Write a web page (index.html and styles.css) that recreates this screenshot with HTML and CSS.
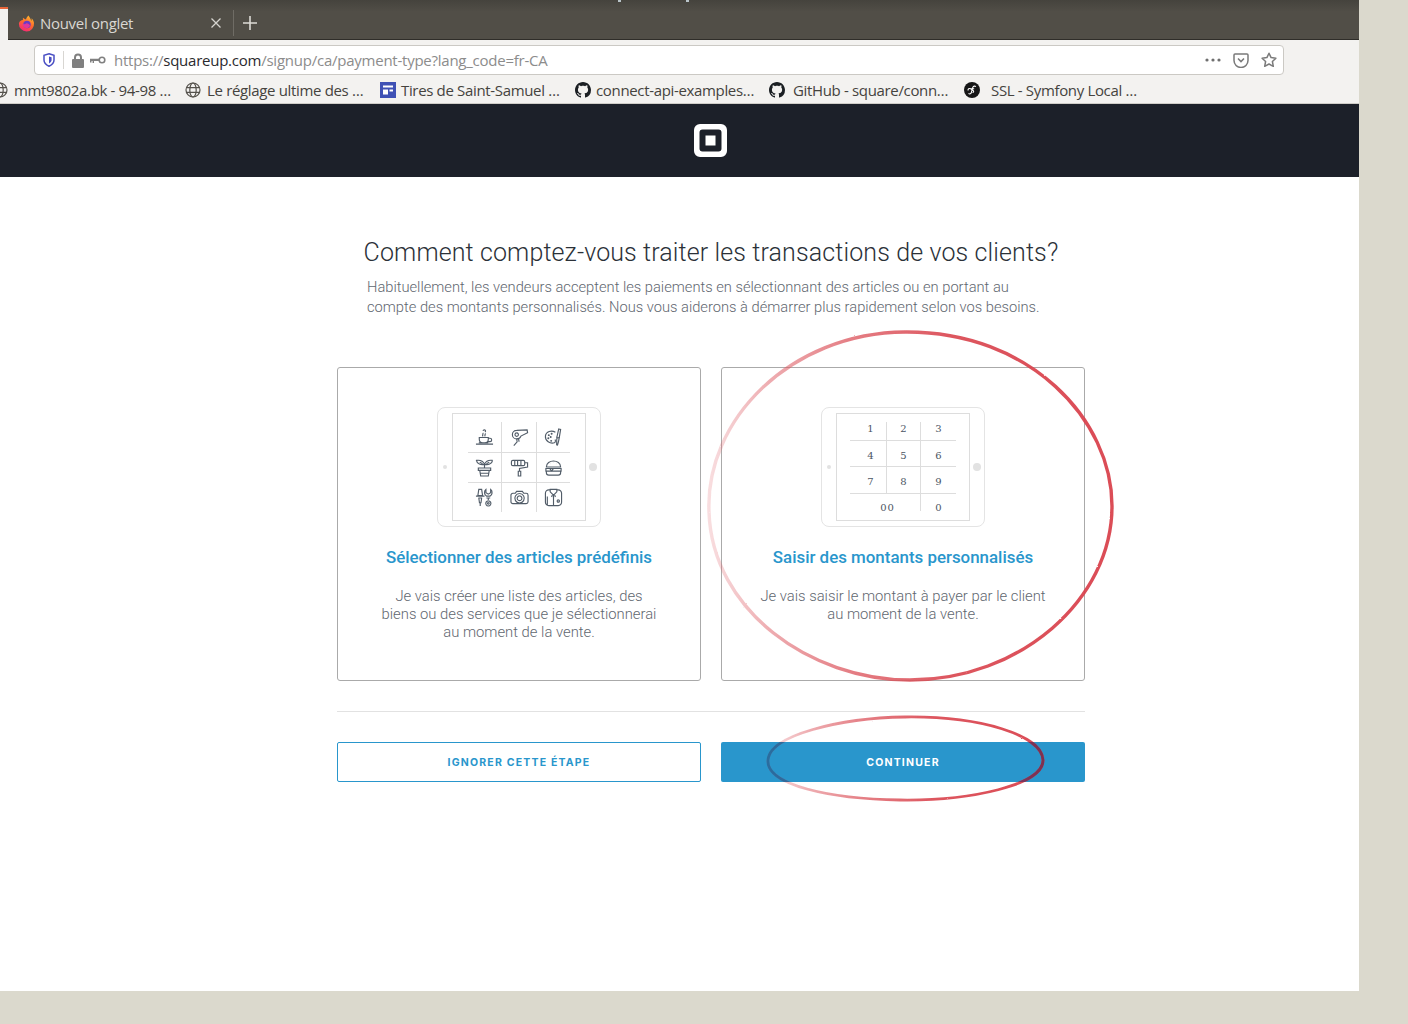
FILE: index.html
```html
<!DOCTYPE html>
<html lang="fr">
<head>
    <meta charset="UTF-8">
    <meta name="viewport" content="width=device-width, initial-scale=1.0">
    <title>Square - Type de paiement</title>
    <link rel="stylesheet" href="styles.css">
</head>
<body>
    <svg class="defs" width="0" height="0">
        <defs>
            <symbol id="octocat" viewBox="0 0 16 16"><path fill="#1b1f23" d="M8 0C3.58 0 0 3.58 0 8c0 3.54 2.29 6.53 5.47 7.59.4.07.55-.17.55-.38 0-.19-.01-.82-.01-1.49-2.01.37-2.53-.49-2.69-.94-.09-.23-.48-.94-.82-1.13-.28-.15-.68-.52-.01-.53.63-.01 1.08.58 1.23.82.72 1.21 1.87.87 2.33.66.07-.52.28-.87.51-1.07-1.78-.2-3.64-.89-3.64-3.95 0-.87.31-1.59.82-2.15-.08-.2-.36-1.02.08-2.12 0 0 .67-.21 2.2.82.64-.18 1.32-.27 2-.27.68 0 1.36.09 2 .27 1.53-1.04 2.2-.82 2.2-.82.44 1.1.16 1.92.08 2.12.51.56.82 1.27.82 2.15 0 3.07-1.87 3.75-3.65 3.95.29.25.54.73.54 1.48 0 1.07-.01 1.93-.01 2.2 0 .21.15.46.55.38A8.013 8.013 0 0016 8c0-4.42-3.58-8-8-8z"/></symbol>
            <symbol id="globe" viewBox="0 0 16 16"><g fill="none" stroke="#55524c" stroke-width="1.2"><circle cx="8" cy="8" r="7"/><ellipse cx="8" cy="8" rx="3.2" ry="7"/><path d="M1.4 5.6h13.2M1.4 10.4h13.2"/></g></symbol>
            <linearGradient id="fox" x1=".8" y1="0" x2=".3" y2="1">
                <stop offset="0" stop-color="#ffc02e"/>
                <stop offset=".5" stop-color="#ff6a2b"/>
                <stop offset="1" stop-color="#f5247c"/>
            </linearGradient>
        </defs>
    </svg>

    <div class="window">
        <div class="tabbar">
            <i class="speck speck-a"></i>
            <i class="speck speck-b"></i>
            <div class="tab-edge"></div>
            <div class="tab">
                <svg class="tab-icon" width="17" height="17" viewBox="0 0 17 17">
                    <path d="M8.500 16.500A7.700 7.700 0 0 0 16 8c-.2-1.800-1-3.500-2.500-4.800.3 1.100.2 2-.2 2.700C12.800 3.500 11 1.800 10.500.5 9 2 8.300 3.300 8 4.500 6.800 4.300 5.800 3.600 5 2.800c-.2 1-.2 1.500 0 2.200C3 5 1.300 6.500.9 8.500a7.700 7.700 0 0 0 7.600 8z" fill="url(#fox)"/>
                    <circle cx="9" cy="9.500" r="3.700" fill="#6a3bc4"/>
                    <path d="M4.300 8.800c1.300.6 2.800.4 3.900-.4 1.700-.2 3.200.8 3.900 2.300-.8 1.700-2.500 2.600-4.300 2.300-1.900-.3-3.200-2.200-3.500-4.200z" fill="#e0389a"/>
                </svg>
                <span class="tab-title">Nouvel onglet</span>
                <svg class="tab-close" width="10" height="10" viewBox="0 0 10 10"><path d="M.5.500l9 9M9.500.500l-9 9" stroke="#d6d4cf" stroke-width="1.300"/></svg>
            </div>
            <div class="tab-sep"></div>
            <svg class="tab-new" width="14" height="14" viewBox="0 0 14 14"><path d="M7 0v14M0 7h14" stroke="#dddbd6" stroke-width="1.600"/></svg>
        </div>

        <div class="toolbar">
            <div class="urlbar">
                <svg class="ico-shield" width="12" height="14" viewBox="0 0 12 14"><path d="M6 .8l5 1.600v4.600c0 3-2.300 5-5 6.200-2.700-1.200-5-3.200-5-6.200V2.400z" fill="none" stroke="#4a4fc4" stroke-width="1.500"/><path d="M6 3.500l2.600.8v2.800c0 1.500-1.200 2.600-2.600 3.300z" fill="#4a4fc4"/></svg>
                <div class="url-sep"></div>
                <svg class="ico-lock" width="12" height="15" viewBox="0 0 12 15"><path d="M2 6V4.500a4 4 0 0 1 8 0V6h1a1 1 0 0 1 1 1v7a1 1 0 0 1-1 1H1a1 1 0 0 1-1-1V7a1 1 0 0 1 1-1zm2 0h4V4.500a2 2 0 0 0-4 0z" fill="#808080"/></svg>
                <svg class="ico-key" width="16" height="8" viewBox="0 0 16 8"><circle cx="12" cy="4" r="2.800" fill="none" stroke="#808080" stroke-width="1.600"/><path d="M0 2.800h9v2.200H4v2H2.600V5H1.500v1.500H0z" fill="#808080"/></svg>
                <div class="url"><span class="url-dim">https://</span><span class="url-host">squareup.com</span><span class="url-dim">/signup/ca/payment-type?lang_code=fr-CA</span></div>
                <div class="url-actions">
                    <svg width="16" height="4" viewBox="0 0 16 4"><g fill="#6f6f6f"><circle cx="2" cy="2" r="1.600"/><circle cx="8" cy="2" r="1.600"/><circle cx="14" cy="2" r="1.600"/></g></svg>
                    <svg width="16" height="15" viewBox="0 0 16 15"><path d="M2 1h12a1 1 0 0 1 1 1v5.500a7 7 0 0 1-14 0V2a1 1 0 0 1 1-1z" fill="none" stroke="#7a7a7a" stroke-width="1.500"/><path d="M5 5.500l3 3 3-3" fill="none" stroke="#7a7a7a" stroke-width="1.600"/></svg>
                    <svg width="16" height="16" viewBox="0 0 16 16"><path d="M8 1.200l2.100 4.400 4.800.6-3.500 3.300.9 4.800L8 12l-4.300 2.300.9-4.800L1.100 6.200l4.800-.6z" fill="none" stroke="#7a7a7a" stroke-width="1.500" stroke-linejoin="round"/></svg>
                </div>
            </div>
        </div>

        <div class="bookmarks">
            <div class="bookmark bm-1"><svg width="16" height="16"><use href="#globe"/></svg><span>mmt9802a.bk - 94-98 …</span></div>
            <div class="bookmark bm-2"><svg width="16" height="16"><use href="#globe"/></svg><span>Le réglage ultime des …</span></div>
            <div class="bookmark bm-3"><svg width="16" height="16" viewBox="0 0 16 16"><rect width="16" height="16" fill="#3f51b5"/><path d="M3 3.500h10v2H3zM3 7.500h5v5H3zM9.500 7.500H13v2H9.500z" fill="#fff"/></svg><span>Tires de Saint-Samuel …</span></div>
            <div class="bookmark bm-4"><svg width="16" height="16"><use href="#octocat"/></svg><span>connect-api-examples…</span></div>
            <div class="bookmark bm-5"><svg width="16" height="16"><use href="#octocat"/></svg><span>GitHub - square/conn…</span></div>
            <div class="bookmark bm-6"><svg width="16" height="16" viewBox="0 0 16 16"><circle cx="8" cy="8" r="8" fill="#161616"/><path d="M11.800 4.800c-.6-1-2.400-.9-3 .6L7.300 10.600c-.4 1.300-1.500 1.700-2.800 1M4.200 8.500c-.6-1.400 1-2.600 2.500-1.700l2.400 1.700c1 .8.600 2-.6 2M6.300 6.700h3.900" fill="none" stroke="#fff" stroke-width="1.100"/></svg><span>SSL - Symfony Local …</span></div>
        </div>

        <header class="site-header">
            <svg class="square-logo" width="33" height="33" viewBox="0 0 33 33"><path fill-rule="evenodd" d="M6 0h21a6 6 0 0 1 6 6v21a6 6 0 0 1-6 6H6a6 6 0 0 1-6-6V6a6 6 0 0 1 6-6zm2.500 5.500a3 3 0 0 0-3 3v16a3 3 0 0 0 3 3h16a3 3 0 0 0 3-3v-16a3 3 0 0 0-3-3zM11.500 11.500h10v10h-10z" fill="#fff"/></svg>
        </header>

        <main class="content">
            <h1 class="title">Comment comptez-vous traiter les transactions de vos clients?</h1>
            <p class="intro">Habituellement, les vendeurs acceptent les paiements en sélectionnant des articles ou en portant au compte des montants personnalisés. Nous vous aiderons à démarrer plus rapidement selon vos besoins.</p>

            <div class="choices">
                <section class="card">
                    <div class="tablet">
                        <i class="cam"></i>
                        <div class="screen">
                            <div class="icon-grid">
                                <!-- cup -->
                                <div class="cell"><svg viewBox="0 0 20 20"><path d="M1 17h18M4 15.500h10M4.500 10H14v1.800a3.700 3.700 0 0 1-3.700 3.700H8.200a3.700 3.700 0 0 1-3.700-3.700zM14 10.800h1.800a1.700 1.700 0 0 1 0 3.500h-2.500M8.500 8.800c-1.600-1.400.8-2.400-.3-3.700M10.800 8.800c-1.200-1.200.4-2 .1-3.200M8.500 3a1.300 1.300 0 1 1 2 1.300"/></svg></div>
                                <!-- hair dryer -->
                                <div class="cell"><svg viewBox="0 0 20 20"><path d="M7 2.500l11-.5.500 3-7 3.500C10.800 10.500 9 11.500 7 11.500a4.500 4.500 0 0 1 0-9zM7 5.200a1.800 1.800 0 1 0 .1 0M7 11.500l.5 3L4 18.500M9 11l.5 3.500"/></svg></div>
                                <!-- palette -->
                                <div class="cell"><svg viewBox="0 0 20 20"><path d="M12 4.500C8 2 2 3.500 1.500 8.500 1 13.500 6.500 17 11 15.500c2-.7.500-2.500 1-3.500"/><path class="dab" d="M5 7.500h.1M8 6h.1M4.500 10.800h.1M7.500 13.500h.1M7 9.500h.1"/><path d="M15.500 1l2 .5-1.500 9-2.500-.5zM13.500 10l2.500.5-.8 4-1 3.500-.9-.3.1-3.700z"/></svg></div>
                                <!-- plant -->
                                <div class="cell"><svg viewBox="0 0 20 20"><path d="M3.500 10.500h13v2.500h-13zM5 13l1 6h8l1-6M5.500 16h9M10 10.500V6M10 6.500C8.500 3 5 2 1.500 2.500 2 6 6.500 8 10 6.500zM10 6.500c1.500-3.500 5-4.500 8.500-4M10 6.500c3.500 1.500 8-.5 8.500-4M5 4.500l3 1.500M15 4.500L12 6"/></svg></div>
                                <!-- paint roller -->
                                <div class="cell"><svg viewBox="0 0 20 20"><rect x="1.500" y="2.500" width="14" height="5.500" rx="1.500"/><path d="M15.500 5h3v4.500L10 11v3M8.700 14h2.600v5H8.700zM5 3v5M8 3v5M11.500 3v5"/></svg></div>
                                <!-- burger -->
                                <div class="cell"><svg viewBox="0 0 20 20"><path d="M2.500 9.500C2.500 1 17.500 1 17.500 9.500zM2 11h16v2.800H2zM2.500 13.800v1.700a2.500 2.500 0 0 0 2.500 2.500h10a2.500 2.500 0 0 0 2.500-2.500v-1.700M6 11l2 2.800 2-2.800M7 6h.1M10 4.500h.1M13 6h.1"/></svg></div>
                                <!-- tools -->
                                <div class="cell"><svg viewBox="0 0 20 20"><path d="M4 1.500h3L8 8H3zM1 8.500h9M3.500 10.500h4M4 10.500l.7 5h1.600l.7-5M5.500 15.500v3.500M11.500 1.500V5l2.500 1.500L16.500 5V1.500c2.500 2 1.500 6-.5 7H12c-2-1-3-5-.5-7zM12 10.500h4M14 10v2.500M14 13.500a2.700 2.700 0 1 0 .1 0M14 15.300a.9.900 0 1 0 .1 0"/></svg></div>
                                <!-- camera -->
                                <div class="cell"><svg viewBox="0 0 20 20"><path d="M3 5.500h2.500L7 3.500h6l1.500 2H17a2 2 0 0 1 2 2v7a2 2 0 0 1-2 2H3a2 2 0 0 1-2-2v-7a2 2 0 0 1 2-2zM10 5.800a5 5 0 1 0 .1 0M10 8.300a2.500 2.500 0 1 0 .1 0"/></svg></div>
                                <!-- shirt -->
                                <div class="cell"><svg viewBox="0 0 20 20"><path d="M6.500 2H5a3.500 3.500 0 0 0-3.500 3.500V15A3.500 3.500 0 0 0 5 18.500h10a3.500 3.500 0 0 0 3.500-3.500V5.500A3.500 3.500 0 0 0 15 2h-1.500M6.500 1.500h7v2.500L10 7.500 6.500 4zM10 7.500V18.500M8.700 7.500l-.7 2M11.300 7.500l.7 2M15 12.500a1.200 1.200 0 1 0 .1 0M3.500 9v9"/></svg></div>
                            </div>
                        </div>
                        <i class="home"></i>
                    </div>
                    <h2 class="card-title">Sélectionner des articles prédéfinis</h2>
                    <p class="card-text">Je vais créer une liste des articles, des<br>biens ou des services que je sélectionnerai<br>au moment de la vente.</p>
                </section>

                <section class="card">
                    <div class="tablet">
                        <i class="cam"></i>
                        <div class="screen">
                            <div class="keypad">
                                <span class="key">1</span><span class="key">2</span><span class="key">3</span>
                                <span class="key">4</span><span class="key">5</span><span class="key">6</span>
                                <span class="key">7</span><span class="key">8</span><span class="key">9</span>
                                <span class="key key-wide">00</span><span class="key">0</span>
                            </div>
                        </div>
                        <i class="home"></i>
                    </div>
                    <h2 class="card-title">Saisir des montants personnalisés</h2>
                    <p class="card-text">Je vais saisir le montant à payer par le client<br>au moment de la vente.</p>
                </section>
            </div>

            <div class="actions">
                <button class="btn btn-outline">Ignorer cette étape</button>
                <button class="btn btn-solid">Continuer</button>
            </div>
        </main>
    </div>

    <svg class="marks" width="1408" height="1024" viewBox="0 0 1408 1024">
        <defs>
            <linearGradient id="fade" x1="0" x2="1" y1="0" y2="0">
                <stop offset="0" stop-color="#e0666e" stop-opacity=".22"/>
                <stop offset=".15" stop-color="#dd5a62" stop-opacity=".5"/>
                <stop offset=".35" stop-color="#dd5a62" stop-opacity=".78"/>
                <stop offset=".6" stop-color="#d9434d" stop-opacity=".9"/>
                <stop offset="1" stop-color="#d9434d" stop-opacity=".95"/>
            </linearGradient>
            <linearGradient id="fade-btn" x1="0" x2="1" y1="0" y2="0">
                <stop offset="0" stop-color="#2a6d9f"/>
                <stop offset=".85" stop-color="#7a3a66"/>
                <stop offset="1" stop-color="#7d3050"/>
            </linearGradient>
            <filter id="pencil" x="-5%" y="-5%" width="110%" height="110%">
                <feTurbulence type="fractalNoise" baseFrequency=".35" numOctaves="2" seed="4"/>
                <feDisplacementMap in="SourceGraphic" scale="1.500" xChannelSelector="R" yChannelSelector="G"/>
                <feGaussianBlur stdDeviation=".4"/>
            </filter>
            <clipPath id="btn-clip"><rect x="721" y="742" width="364" height="40"/></clipPath>
        </defs>
        <path class="mark" d="M709 512C705 420 790 333 905 332C1030 331 1112 420 1112 506C1112 600 1020 680 910 680C810 680 712 610 709 512Z"/>
        <path class="mark mark-thin" d="M768 760C770 735 840 718 905 717C980 716 1042 735 1043 760C1044 785 970 801 900 800C830 799 766 785 768 760Z"/>
        <g clip-path="url(#btn-clip)">
            <path class="mark mark-thin mark-over" d="M768 760C770 735 840 718 905 717C980 716 1042 735 1043 760C1044 785 970 801 900 800C830 799 766 785 768 760Z"/>
        </g>
    </svg>
</body>
</html>
```

FILE: styles.css
```css
* {
    box-sizing: border-box;
}
body {
    margin: 0;
    height: 1024px;
    overflow: hidden;
    background-color: #dbd9cd;
    font-family: "Roboto", sans-serif;
    position: relative;
}
.defs {
    position: absolute;
}
.window {
    width: 1359px;
    height: 991px;
    background-color: #fff;
    display: flex;
    flex-direction: column;
}

/* browser chrome */
.tabbar {
    position: relative;
    height: 40px;
    flex: none;
    display: flex;
    align-items: center;
    padding-top: 7px;
    background: linear-gradient(#45433d, #514e47 30%);
    border-bottom: 1px solid #2f2d29;
}
.speck {
    position: absolute;
    top: 0;
    width: 3px;
    height: 2px;
    background-color: #b9c4c9;
}
.speck-a { left: 618px; }
.speck-b { left: 686px; }
.tab-edge {
    width: 8px;
    height: 33px;
    margin-bottom: -1px;
    align-self: flex-end;
    background-color: #f3f2f0;
    border-top: 2px solid #e8663a;
}
.tab {
    width: 225px;
    display: flex;
    align-items: center;
    padding-left: 10px;
    font-family: "Open Sans", sans-serif;
    font-size: 15px;
    letter-spacing: -0.3px;
    color: #d9d7d2;
}
.tab-icon {
    margin-right: 5px;
}
.tab-close {
    margin-left: auto;
    margin-right: 12px;
}
.tab-sep {
    width: 1px;
    height: 26px;
    background-color: #6f6c65;
}
.tab-new {
    margin-left: 9px;
}
.toolbar {
    height: 40px;
    flex: none;
    background-color: #f3f2f0;
    padding: 5px 75px 5px 34px;
}
.urlbar {
    height: 30px;
    display: flex;
    align-items: center;
    padding: 0 6px 0 8px;
    background-color: #fff;
    border: 1px solid #cbc9c4;
    border-radius: 4px;
    font-family: "Open Sans", sans-serif;
    font-size: 15px;
    letter-spacing: -0.24px;
}
.ico-shield {
    flex: none;
}
.url-sep {
    width: 1px;
    height: 18px;
    margin: 0 8px;
    background-color: #d8d6d2;
}
.ico-key {
    margin-left: 6px;
    margin-right: 8px;
}
.url-dim {
    color: #8c8c8c;
}
.url-host {
    color: #2a2a2e;
}
.url-actions {
    margin-left: auto;
    display: flex;
    align-items: center;
    gap: 12px;
}
.bookmarks {
    height: 24px;
    flex: none;
    display: flex;
    align-items: center;
    margin-left: -8px;
    padding-bottom: 3px;
    background-color: #f3f2f0;
    font-family: "Open Sans", sans-serif;
    font-size: 15px;
    letter-spacing: -0.34px;
    color: #45433e;
    border-bottom: 1px solid #cfcdc8;
    white-space: nowrap;
}
.bookmark {
    display: flex;
    align-items: center;
    gap: 6px;
}
.bookmark svg {
    flex: none;
}
.bm-1 { width: 193px; }
.bm-2 { width: 195px; }
.bm-3 { width: 195px; gap: 5px; }
.bm-4 { width: 194px; gap: 5px; }
.bm-5 { width: 195px; gap: 8px; }
.bm-6 span { margin-left: 5px; }

/* square page */
.site-header {
    height: 73px;
    flex: none;
    display: flex;
    align-items: center;
    justify-content: center;
    padding-left: 61px;
    background-color: #1c2029;
}
.content {
    width: 748px;
    margin-left: 337px;
    padding-top: 60px;
}
.title {
    margin: 0;
    font-size: 25px;
    font-weight: 300;
    letter-spacing: 0.12px;
    line-height: 32px;
    text-align: center;
    white-space: nowrap;
    color: #2b3138;
}
.intro {
    width: 690px;
    margin: 8px 0 0 30px;
    font-size: 14.700px;
    font-weight: 300;
    line-height: 20px;
    color: #5f6770;
}
.choices {
    display: grid;
    grid-template-columns: 1fr 1fr;
    gap: 20px;
    margin-top: 50px;
}
.card {
    height: 314px;
    padding-top: 39px;
    text-align: center;
    border: 1px solid #aaa;
    border-radius: 3px;
}
.tablet {
    width: 164px;
    height: 120px;
    margin: 0 auto;
    padding: 5px 0;
    display: flex;
    align-items: center;
    border: 1px solid #e4e4e4;
    border-radius: 8px;
}
.cam {
    width: 4px;
    height: 4px;
    margin: 0 5px;
    border-radius: 50%;
    background-color: #e2e2e2;
}
.home {
    width: 8px;
    height: 8px;
    margin-left: 3px;
    border-radius: 50%;
    background-color: #e2e2e2;
}
.screen {
    width: 134px;
    height: 108px;
    padding: 8px 15px;
    border: 1px solid #ddd;
}
.icon-grid {
    display: grid;
    grid-template-columns: 34px 35px 33px;
    grid-template-rows: 31px 30px 29px;
}
.cell {
    display: flex;
    align-items: center;
    justify-content: center;
    border-right: 1px solid #ddd;
    border-bottom: 1px solid #ddd;
}
.cell:nth-child(3n) {
    border-right: none;
}
.cell:nth-child(n+7) {
    border-bottom: none;
}
.cell svg {
    width: 19px;
    height: 19px;
    fill: none;
    stroke: #515c68;
    stroke-width: 1.200;
}
.cell .dab {
    stroke-width: 2;
    stroke-linecap: round;
}
.keypad {
    display: grid;
    grid-template-columns: 37px 34px 35px;
    grid-template-rows: 19px 26px 27px 17px;
    margin: 0 -2px;
}
.key {
    display: flex;
    align-items: center;
    justify-content: center;
    font-family: "DejaVu Serif", serif;
    font-size: 10px;
    color: #4b5563;
    border-right: 1px solid #ddd;
    border-bottom: 1px solid #ddd;
}
.key:nth-child(3n) {
    border-right: none;
}
.key:nth-child(-n+3) {
    padding-bottom: 6px;
}
.key:nth-child(n+4):nth-child(-n+6) {
    padding-top: 3px;
}
.key:nth-child(n+7):nth-child(-n+9) {
    padding-top: 2px;
}
.key:nth-child(3n+1) {
    padding-left: 5px;
}
.key-wide {
    grid-column: span 2;
    padding: 10px 0 0;
    letter-spacing: 1px;
    border-bottom: none;
}
.key:last-child {
    padding-top: 10px;
    border-right: none;
    border-bottom: none;
}
.card-title {
    margin: 19px 0 0;
    font-size: 16.900px;
    font-weight: 500;
    line-height: 22px;
    color: #2996cc;
}
.card-text {
    margin: 19px 0 0;
    font-size: 14.800px;
    font-weight: 300;
    line-height: 18px;
    color: #5f6770;
}
.actions {
    display: grid;
    grid-template-columns: 1fr 1fr;
    gap: 20px;
    margin-top: 30px;
    padding-top: 30px;
    border-top: 1px solid #e2e2e2;
}
.btn {
    height: 40px;
    font-family: "Inter", sans-serif;
    font-size: 10.500px;
    font-weight: 700;
    letter-spacing: 1.200px;
    text-transform: uppercase;
    border-radius: 2px;
    cursor: pointer;
}
.btn-outline {
    color: #2996cc;
    background-color: #fff;
    border: 1px solid #2996cc;
}
.btn-solid {
    color: #fff;
    background-color: #2996cc;
    border: none;
}

/* hand drawn circles over the screenshot */
.marks {
    position: absolute;
    top: 0;
    left: 0;
    pointer-events: none;
}
.mark {
    fill: none;
    stroke: url(#fade);
    stroke-width: 3.400;
    filter: url(#pencil);
}
.mark-thin {
    stroke-width: 2.800;
}
.mark-over {
    stroke: url(#fade-btn);
}
```
